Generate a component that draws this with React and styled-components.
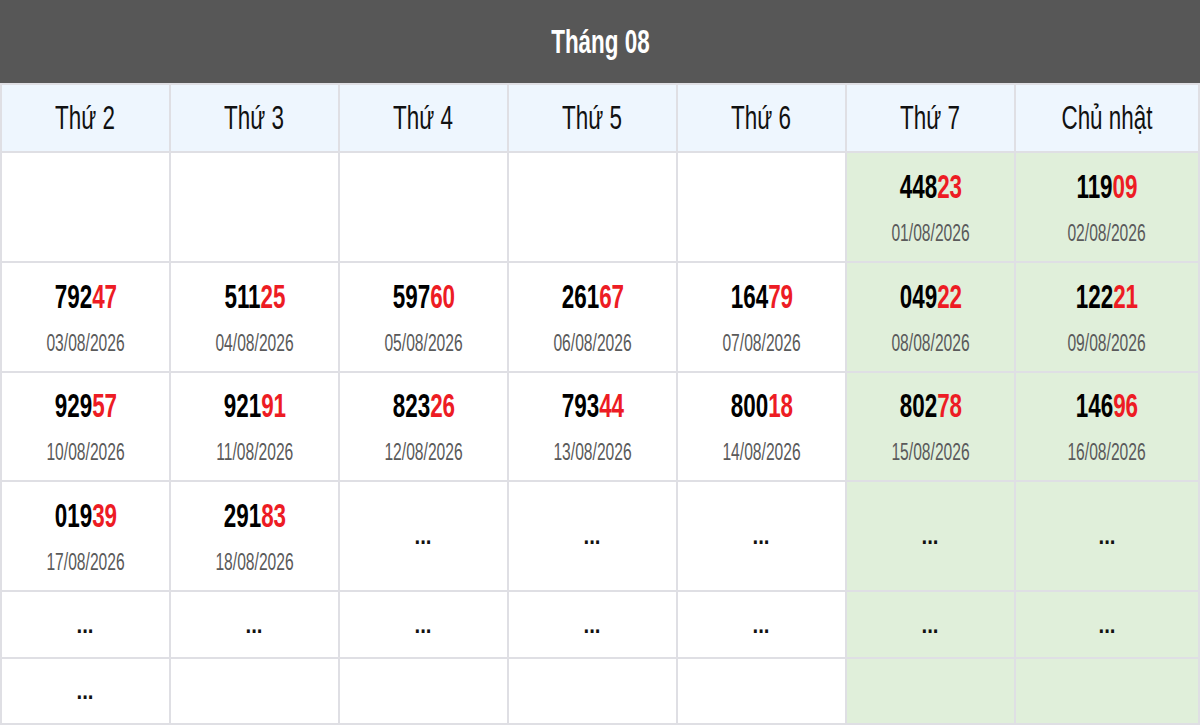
import styled, { createGlobalStyle } from "styled-components";

const GlobalStyle = createGlobalStyle`
  html, body {
    margin: 0;
    padding: 0;
    background: #ffffff;
  }
  body {
    font-family: "Liberation Sans", Arial, sans-serif;
  }
`;

const Calendar = styled.div`
  width: 1200px;
  height: 725px;
  display: flex;
  flex-direction: column;
  overflow: hidden;
`;

const Title = styled.div`
  height: 83px;
  background: #575757;
  color: #ffffff;
  font-weight: bold;
  font-size: 33px;
  display: flex;
  align-items: center;
  justify-content: center;
  flex-shrink: 0;
`;

// the reference text is horizontally squeezed
const Squeeze = styled.span`
  display: inline-block;
  transform: scaleX(${(p) => p.$x || 0.68});
  transform-origin: center;
  white-space: nowrap;
`;

const Grid = styled.div`
  display: grid;
  grid-template-columns: repeat(6, 167px) 1fr;
  grid-template-rows: 66px 108px 108px 107px 108px 65px 64px;
  gap: 2px;
  padding: 2px;
  background: #dfdfe4;
`;

const HeadCell = styled.div`
  background: #eef6fe;
  color: #111111;
  font-size: 33px;
  display: flex;
  align-items: center;
  justify-content: center;
`;

const Cell = styled.div`
  background: ${(p) => (p.$weekend ? "#e0efda" : "#ffffff")};
  display: flex;
  flex-direction: column;
  align-items: center;
  justify-content: center;
  gap: 14px;
`;

const Number = styled.div`
  font-size: 33px;
  font-weight: bold;
  line-height: 38px;
  color: #000000;
`;

const Tail = styled.span`
  color: #ed1c24;
`;

const DateText = styled.div`
  font-size: 23px;
  line-height: 27px;
  color: #5a5a5a;
`;

const Dots = styled.div`
  font-size: 24px;
  font-weight: bold;
  color: #111111;
  line-height: 28px;
`;

const days = ["Thứ 2", "Thứ 3", "Thứ 4", "Thứ 5", "Thứ 6", "Thứ 7", "Chủ nhật"];

const results = {
  1: "44823",
  2: "11909",
  3: "79247",
  4: "51125",
  5: "59760",
  6: "26167",
  7: "16479",
  8: "04922",
  9: "12221",
  10: "92957",
  11: "92191",
  12: "82326",
  13: "79344",
  14: "80018",
  15: "80278",
  16: "14696",
  17: "01939",
  18: "29183",
};

// 6 weeks x 7 days; August 2026 starts on Saturday
const cells = Array.from({ length: 42 }, (_, i) => i - 4);

function DayCell({ day, col }) {
  const weekend = col >= 5;
  if (day < 1 || day > 31) {
    return <Cell $weekend={weekend} />;
  }
  const value = results[day];
  if (!value) {
    return (
      <Cell $weekend={weekend}>
        <Dots>
          <Squeeze $x={0.85}>...</Squeeze>
        </Dots>
      </Cell>
    );
  }
  const dd = String(day).padStart(2, "0");
  return (
    <Cell $weekend={weekend}>
      <Number>
        <Squeeze>
          {value.slice(0, 3)}
          <Tail>{value.slice(3)}</Tail>
        </Squeeze>
      </Number>
      <DateText>
        <Squeeze>{dd}/08/2026</Squeeze>
      </DateText>
    </Cell>
  );
}

export default function App() {
  return (
    <Calendar>
      <GlobalStyle />
      <Title>
        <Squeeze>Tháng 08</Squeeze>
      </Title>
      <Grid>
        {days.map((d) => (
          <HeadCell key={d}>
            <Squeeze>{d}</Squeeze>
          </HeadCell>
        ))}
        {cells.map((day, i) => (
          <DayCell key={i} day={day} col={i % 7} />
        ))}
      </Grid>
    </Calendar>
  );
}
